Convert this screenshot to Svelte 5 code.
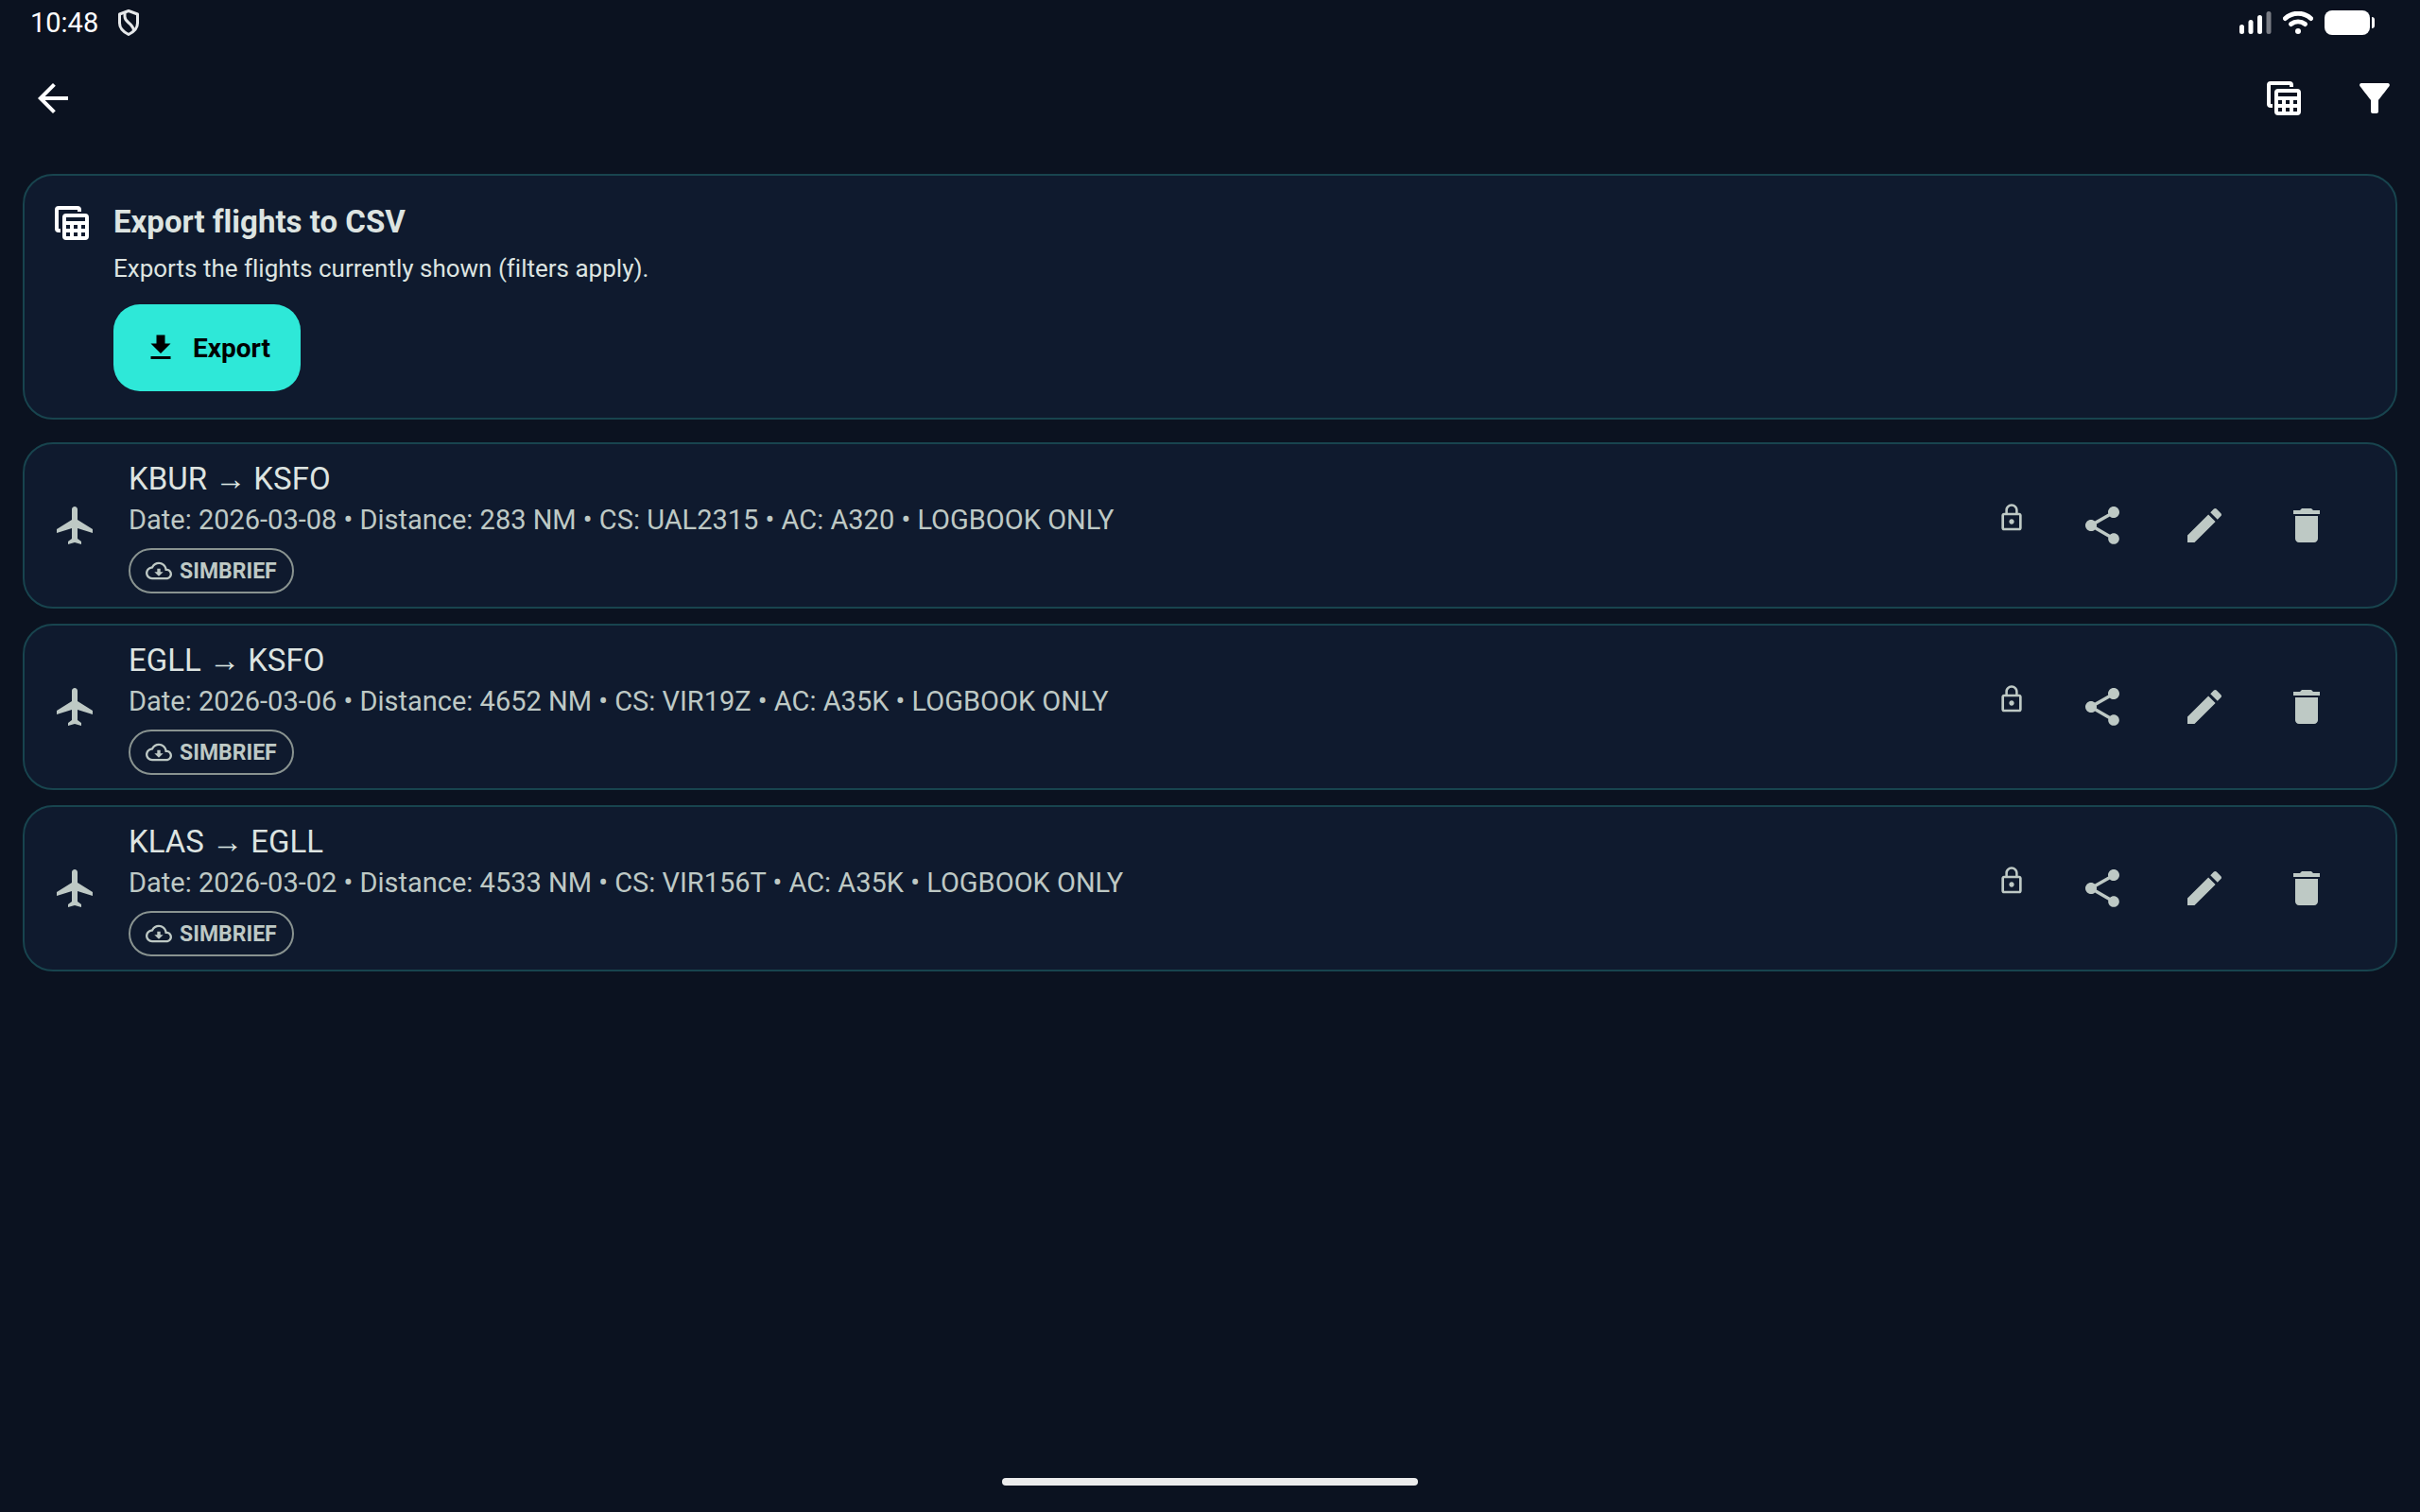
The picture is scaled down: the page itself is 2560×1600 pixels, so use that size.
<script>
  const flights = [
    { from: 'KBUR', to: 'KSFO', date: '2026-03-08', distance: 283, callsign: 'UAL2315', aircraft: 'A320' },
    { from: 'EGLL', to: 'KSFO', date: '2026-03-06', distance: 4652, callsign: 'VIR19Z', aircraft: 'A35K' },
    { from: 'KLAS', to: 'EGLL', date: '2026-03-02', distance: 4533, callsign: 'VIR156T', aircraft: 'A35K' }
  ];

  const icons = {
    back: 'M20 11H7.83l5.59-5.59L12 4l-8 8 8 8 1.41-1.41L7.83 13H20v-2z',
    table:
      'M5 3h10a2 2 0 0 1 2 2v1h-2V5H5v10h1v2H5a2 2 0 0 1-2-2V5a2 2 0 0 1 2-2zM9 7h10a2 2 0 0 1 2 2v10a2 2 0 0 1-2 2H9a2 2 0 0 1-2-2V9a2 2 0 0 1 2-2zM9 9v2h10V9zM9 13v2h2v-2zM13 13v2h2v-2zM17 13v2h2v-2zM9 17v2h2v-2zM13 17v2h2v-2zM17 17v2h2v-2z',
    filter:
      'M4.25 5.61C6.27 8.2 10 13 10 13v6c0 .55.45 1 1 1h2c.55 0 1-.45 1-1v-6s3.72-4.8 5.74-7.39c.51-.66.04-1.61-.79-1.61H5.04c-.83 0-1.3.95-.79 1.61z',
    download: 'M19 9h-4V3H9v6H5l7 7 7-7zM5 18v2h14v-2H5z',
    plane:
      'M21 16v-2l-8-5V3.5c0-.83-.67-1.5-1.5-1.5S10 2.67 10 3.5V9l-8 5v2l8-2.5V19l-2 1.5V22l3.5-1 3.5 1v-1.5L13 19v-5.5l8 2.5z',
    cloud:
      'M19.35 10.04C18.67 6.59 15.64 4 12 4 9.11 4 6.6 5.64 5.35 8.04 2.34 8.36 0 10.91 0 14c0 3.31 2.69 6 6 6h13c2.76 0 5-2.24 5-5 0-2.64-2.05-4.78-4.65-4.96zM19 18H6c-2.21 0-4-1.79-4-4 0-2.05 1.53-3.76 3.56-3.97l1.07-.11.5-.95C8.08 7.14 9.94 6 12 6c2.62 0 4.88 1.86 5.39 4.43l.3 1.5 1.53.11c1.56.1 2.78 1.41 2.78 2.96 0 1.65-1.35 3-3 3zm-5.55-8h-2.9v3H8l4 4 4-4h-2.55v-3z',
    lock: 'M12 17c1.1 0 2-.9 2-2s-.9-2-2-2-2 .9-2 2 .9 2 2 2zm6-9h-1V6c0-2.76-2.24-5-5-5S7 3.24 7 6v2H6c-1.1 0-2 .9-2 2v10c0 1.1.9 2 2 2h12c1.1 0 2-.9 2-2V10c0-1.1-.9-2-2-2zM8.9 6c0-1.71 1.39-3.1 3.1-3.1s3.1 1.39 3.1 3.1v2H8.9V6zM18 20H6V10h12v10z',
    share:
      'M18 16.08c-.76 0-1.44.3-1.96.77L8.91 12.7c.05-.23.09-.46.09-.7s-.04-.47-.09-.7l7.05-4.11c.54.5 1.25.81 2.04.81 1.66 0 3-1.34 3-3s-1.34-3-3-3-3 1.34-3 3c0 .24.04.47.09.7L8.04 9.81C7.5 9.31 6.79 9 6 9c-1.66 0-3 1.34-3 3s1.34 3 3 3c.79 0 1.5-.31 2.04-.81l7.12 4.16c-.05.21-.08.43-.08.65 0 1.61 1.31 2.92 2.92 2.92s2.92-1.31 2.92-2.92-1.31-2.92-2.92-2.92z',
    edit: 'M3 17.25V21h3.75L17.81 9.94l-3.75-3.75L3 17.25zM20.71 7.04c.39-.39.39-1.02 0-1.41l-2.34-2.34c-.39-.39-1.02-.39-1.41 0l-1.83 1.83 3.75 3.75 1.83-1.83z',
    trash: 'M6 19c0 1.1.9 2 2 2h8c1.1 0 2-.9 2-2V7H6v12zM19 4h-3.5l-1-1h-5l-1 1H5v2h14V4z'
  };
</script>

{#snippet icon(name)}
  <svg class="icon {name}" viewBox="0 0 24 24" aria-hidden="true">
    <path fill-rule="evenodd" d={icons[name]} />
  </svg>
{/snippet}

<div class="screen">
  <div class="status-bar">
    <div class="status-group">
      <span class="clock">10:48</span>
      <svg class="shield" viewBox="0 0 24 28" aria-hidden="true">
        <path d="M12 1.500 2.500 5v9.500C2.500 20 7 24 12 26.500c5-2.500 9.500-6.500 9.500-12V5z" />
        <path d="M8 3.500v4c0 3 1.500 4.500 4 6.500 3 2.500 5 4.500 5.500 8" />
      </svg>
    </div>
    <div class="status-group">
      <svg class="signal" viewBox="0 0 34 24" aria-hidden="true">
        <rect x="0" y="14" width="5" height="10" rx="2.500" />
        <rect x="9.500" y="9" width="5" height="15" rx="2.500" />
        <rect x="19" y="4" width="5" height="20" rx="2.500" />
        <rect class="dim" x="28.500" y="0" width="5" height="24" rx="2.500" />
      </svg>
      <svg class="wifi" viewBox="0 0 32 24" aria-hidden="true">
        <path d="M2.500 7.500C10 .5 22 .5 29.500 7.500" />
        <path d="M8.500 13.500c4.500-3.500 10.500-3.500 15 0" />
        <circle cx="16" cy="21" r="3" />
      </svg>
      <svg class="battery" viewBox="0 0 53 26" aria-hidden="true">
        <rect x="0" y="0" width="48" height="26" rx="8" />
        <path d="M50 7c2 0 3 1 3 3v6c0 2-1 3-3 3z" />
      </svg>
    </div>
  </div>

  <header class="app-bar">
    <button class="icon-button" type="button" aria-label="Back">{@render icon('back')}</button>
    <div class="actions">
      <button class="icon-button" type="button" aria-label="Export table">{@render icon('table')}</button>
      <button class="icon-button" type="button" aria-label="Filter">{@render icon('filter')}</button>
    </div>
  </header>

  <main>
    <section class="card export-card">
      {@render icon('table')}
      <div class="export-body">
        <h1>Export flights to CSV</h1>
        <p>Exports the flights currently shown (filters apply).</p>
        <button class="export-button" type="button">{@render icon('download')}Export</button>
      </div>
    </section>

    <ul class="flights">
      {#each flights as f}
        <li class="card flight">
          {@render icon('plane')}
          <div class="details">
            <h2>{f.from} → {f.to}</h2>
            <p>Date: {f.date} • Distance: {f.distance} NM • CS: {f.callsign} • AC: {f.aircraft} • LOGBOOK ONLY</p>
            <span class="chip">{@render icon('cloud')}SIMBRIEF</span>
          </div>
          <span class="locked">{@render icon('lock')}</span>
          <div class="row-actions">
            <button class="icon-button" type="button" aria-label="Share">{@render icon('share')}</button>
            <button class="icon-button" type="button" aria-label="Edit">{@render icon('edit')}</button>
            <button class="icon-button" type="button" aria-label="Delete">{@render icon('trash')}</button>
          </div>
        </li>
      {/each}
    </ul>
  </main>

  <div class="home-indicator"></div>
</div>

<style>
  :global(body) {
    background: #0b1220;
  }

  .screen {
    box-sizing: border-box;
    min-height: 100vh;
    display: flex;
    flex-direction: column;
    color: #dde4e1;
    font-family: Roboto, 'Liberation Sans', sans-serif;
    font-variant-ligatures: none;
  }

  .icon {
    display: block;
    flex: none;
    width: 48px;
    height: 48px;
    fill: currentColor;
  }

  button {
    border: 0;
    margin: 0;
    font-family: inherit;
    color: inherit;
    background: none;
  }

  h1,
  h2,
  p,
  ul {
    margin: 0;
    padding: 0;
  }

  .status-bar {
    display: flex;
    justify-content: space-between;
    height: 48px;
    padding: 0 48px 0 32px;
    color: #fff;
  }

  .status-group {
    display: flex;
    align-items: center;
    gap: 12px;
  }

  .clock {
    margin-right: 8px;
    font-size: 29px;
    line-height: 48px;
  }

  .shield {
    width: 24px;
    height: 28px;
    fill: none;
    stroke: #e6e8ea;
    stroke-width: 3;
    stroke-linejoin: round;
  }

  .signal {
    width: 34px;
    height: 24px;
    fill: #fff;
  }

  .dim {
    opacity: 0.45;
  }

  .wifi {
    width: 32px;
    height: 24px;
    fill: none;
    stroke: #fff;
    stroke-width: 5;
    stroke-linecap: round;
  }

  .wifi circle {
    fill: #fff;
    stroke: none;
  }

  .battery {
    width: 53px;
    height: 26px;
    fill: #fff;
  }

  .app-bar {
    display: flex;
    align-items: center;
    justify-content: space-between;
    height: 112px;
    padding-left: 8px;
    color: #fff;
  }

  .actions,
  .row-actions {
    display: flex;
  }

  .row-actions {
    gap: 12px;
  }

  .icon-button {
    display: grid;
    place-items: center;
    width: 96px;
    height: 96px;
    padding: 0;
  }

  main {
    flex: 1;
    padding: 24px;
  }

  .card {
    display: flex;
    border: 2px solid #18444e;
    border-radius: 32px;
    background: #0f1a2e;
  }

  .export-card {
    gap: 20px;
    padding: 26px 26px 28px;
    margin-bottom: 24px;
  }

  .export-card > :global(.icon) {
    color: #fff;
  }

  h1 {
    font-size: 33px;
    font-weight: 700;
    line-height: 46px;
  }

  .export-body p {
    margin-top: 10px;
    font-size: 26px;
    line-height: 32px;
  }

  .export-button {
    display: flex;
    align-items: center;
    gap: 16px;
    height: 92px;
    margin-top: 22px;
    padding: 0 32px;
    border-radius: 28px;
    background: #2ee8d8;
    color: #000;
    font-size: 28px;
    font-weight: 700;
  }

  .download {
    width: 36px;
    height: 36px;
  }

  .flights {
    display: flex;
    flex-direction: column;
    gap: 16px;
    list-style: none;
  }

  .flight {
    align-items: center;
    padding: 14px 46px 14px 30px;
    color: #bec9c5;
  }

  .details {
    flex: 1;
    margin-left: 32px;
  }

  h2 {
    color: #dde4e1;
    font-size: 33px;
    font-weight: 400;
    line-height: 46px;
  }

  .details p {
    font-size: 29px;
    line-height: 40px;
  }

  .chip {
    box-sizing: border-box;
    display: flex;
    align-items: center;
    gap: 8px;
    width: fit-content;
    height: 48px;
    margin-top: 10px;
    padding: 0 16px;
    border: 2px solid #899390;
    border-radius: 24px;
    font-size: 23px;
    font-weight: 700;
  }

  .cloud {
    width: 28px;
    height: 28px;
  }

  .locked {
    padding-bottom: 16px;
    margin-right: 32px;
  }

  .lock {
    width: 32px;
    height: 32px;
  }

  .home-indicator {
    align-self: center;
    width: 440px;
    height: 8px;
    margin-bottom: 28px;
    border-radius: 4px;
    background: #ececec;
  }
</style>
